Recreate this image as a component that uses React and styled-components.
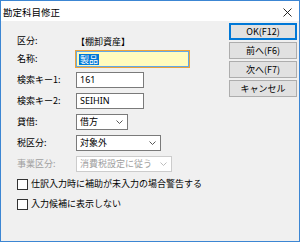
import React from 'react';
import styled, { createGlobalStyle } from 'styled-components';

const Global = createGlobalStyle`
  html, body {
    margin: 0;
    padding: 0;
    background: #ffffff;
  }
  body {
    font-family: "Noto Sans CJK JP", "Noto Sans", sans-serif;
    font-size: 9px;
    color: #000;
  }
`;

export default function App() {
  return (
    <>
      <Global />
      <Window>
        <TitleBar>
          <Title>勘定科目修正</Title>
          <CloseIcon viewBox="0 0 9 9">
            <path d="M0.5 0.5 L8.5 8.5 M8.5 0.5 L0.5 8.5" stroke="#111" strokeWidth="0.9" />
          </CloseIcon>
        </TitleBar>
        <Body>
          <Form>
            <KindRow>
              <Label>区分:</Label>
              <Value>【棚卸資産】</Value>
            </KindRow>
            <Fields>
              <Label>名称:</Label>
              <NameInput>
                <Selected>製品</Selected>
              </NameInput>

              <Label>検索キー1:</Label>
              <TextBox width={68}>161</TextBox>

              <Label>検索キー2:</Label>
              <TextBox width={68}>SEIHIN</TextBox>

              <Label>貸借:</Label>
              <Combo width={52}>
                借方
                <Chevron />
              </Combo>

              <Label>税区分:</Label>
              <Combo width={85}>
                対象外
                <Chevron />
              </Combo>

              <Label disabled>事業区分:</Label>
              <Combo width={96} disabled>
                消費税設定に従う
                <Chevron disabled />
              </Combo>
            </Fields>
            <Checks>
              <CheckRow>
                <Box />
                仕訳入力時に補助が未入力の場合警告する
              </CheckRow>
              <CheckRow>
                <Box />
                入力候補に表示しない
              </CheckRow>
            </Checks>
          </Form>
          <Buttons>
            <Button primary>OK(F12)</Button>
            <Button>前へ(F6)</Button>
            <Button>次へ(F7)</Button>
            <Button>キャンセル</Button>
          </Buttons>
        </Body>
      </Window>
    </>
  );
}

function Chevron({ disabled }) {
  return (
    <ChevronSvg viewBox="0 0 7 4">
      <path
        d="M0.5 0.5 L3.5 3.5 L6.5 0.5"
        fill="none"
        stroke={disabled ? '#b5b5b5' : '#444'}
        strokeWidth="0.9"
      />
    </ChevronSvg>
  );
}

const Window = styled.div`
  width: 300px;
  height: 242px;
  box-sizing: border-box;
  border: 1px solid #3c86d3;
  background: #f0f0f0;
  display: flex;
  flex-direction: column;
`;

const TitleBar = styled.div`
  height: 20px;
  background: #ffffff;
  display: flex;
  align-items: center;
  justify-content: space-between;
  padding: 0 7px 0 2px;
`;

const Title = styled.span`
  font-size: 9.5px;
  line-height: 12px;
  margin-top: 1px;
`;

const CloseIcon = styled.svg`
  width: 9px;
  height: 9px;
  margin-top: 2px;
`;

const Body = styled.div`
  flex: 1;
  display: flex;
`;

const Form = styled.div`
  flex: 1;
  padding: 12px 0 0 16px;
`;

const KindRow = styled.div`
  display: grid;
  grid-template-columns: 59px auto;
  height: 15px;
  align-items: center;
`;

const Label = styled.div`
  font-size: 9px;
  line-height: 16px;
  color: ${(p) => (p.disabled ? '#a0a0a0' : '#000')};
`;

const Value = styled.div`
  font-size: 9px;
  line-height: 15px;
`;

const Fields = styled.div`
  display: grid;
  grid-template-columns: 59px auto;
  grid-auto-rows: 16px;
  row-gap: 5px;
  margin-top: 3px;
  justify-items: start;
  align-items: center;
`;

const TextBox = styled.div`
  box-sizing: border-box;
  width: ${(p) => p.width}px;
  height: 16px;
  background: #ffffff;
  border: 1px solid #7a7a7a;
  padding-left: 3px;
  font-size: 9px;
  line-height: 14px;
  font-family: "Noto Sans", "Noto Sans CJK JP", sans-serif;
`;

const NameInput = styled.div`
  box-sizing: border-box;
  width: 113px;
  height: 16px;
  margin-left: 0px;
  background: #fffbbe;
  border: 1px solid #63a8e6;
  box-shadow: 0 0 0 1px #eda43a;
  padding-left: 2px;
  display: flex;
  align-items: center;
`;

const Selected = styled.span`
  background: #0078d7;
  color: #ffffff;
  font-size: 9px;
  line-height: 11px;
  padding: 0 1px;
`;

const Combo = styled.div`
  box-sizing: border-box;
  width: ${(p) => p.width}px;
  height: 16px;
  background: #ffffff;
  border: 1px solid ${(p) => (p.disabled ? '#cccccc' : '#7a7a7a')};
  color: ${(p) => (p.disabled ? '#a0a0a0' : '#000')};
  padding: 0 4px 0 3px;
  display: flex;
  align-items: center;
  justify-content: space-between;
  font-size: 9px;
  line-height: 14px;
`;

const ChevronSvg = styled.svg`
  width: 7px;
  height: 4px;
`;

const Checks = styled.div`
  margin-top: 6px;
  display: flex;
  flex-direction: column;
  gap: 8px;
`;

const CheckRow = styled.div`
  display: flex;
  align-items: center;
  gap: 3px;
  font-size: 9px;
  line-height: 12px;
`;

const Box = styled.span`
  box-sizing: border-box;
  width: 11px;
  height: 11px;
  background: #ffffff;
  border: 1px solid #333333;
`;

const Buttons = styled.div`
  width: 68px;
  margin-right: 2px;
  padding-top: 2px;
  display: flex;
  flex-direction: column;
  gap: 2px;
`;

const Button = styled.div`
  box-sizing: border-box;
  height: 17px;
  background: #e1e1e1;
  border: 1px solid ${(p) => (p.primary ? '#0078d7' : '#adadad')};
  box-shadow: ${(p) => (p.primary ? 'inset 0 0 0 1px #0078d7' : 'none')};
  display: flex;
  align-items: center;
  justify-content: center;
  font-size: 9px;
  line-height: 12px;
`;
